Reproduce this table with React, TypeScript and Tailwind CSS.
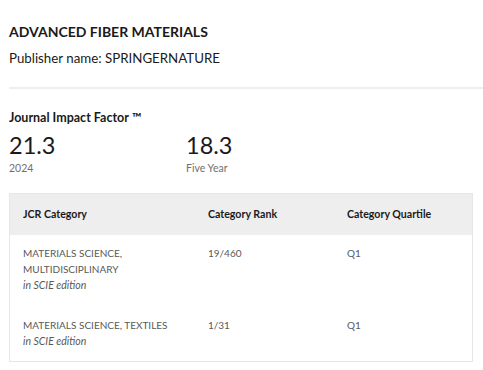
import React from 'react';

const rows = [
  { category: ['MATERIALS SCIENCE,', 'MULTIDISCIPLINARY'], rank: '19/460', quartile: 'Q1' },
  { category: ['MATERIALS SCIENCE, TEXTILES'], rank: '1/31', quartile: 'Q1' },
];

const App: React.FC = () => {
  return (
    <div className="w-[483px] h-[370px] bg-white text-[#1a1a1a] font-['Lato','Liberation_Sans',sans-serif] pl-[9px] pt-[23px]">
      <h1 className="text-[14px] font-bold leading-[18px]">ADVANCED FIBER MATERIALS</h1>
      <p className="mt-[8px] text-[13.3px] leading-[18px]">Publisher name: SPRINGERNATURE</p>

      <div className="mt-[20px] h-[2px] bg-[#eeeeee] w-[474px]" />

      <h2 className="mt-[21px] text-[12.5px] font-bold leading-[16px]">Journal Impact Factor ™</h2>
      <div className="mt-[4px] flex">
        <div className="w-[177px]">
          <div className="text-[23.5px] leading-[30px]">21.3</div>
          <div className="mt-[1px] text-[10.5px] leading-[14px] text-[#707070]">2024</div>
        </div>
        <div>
          <div className="text-[23.5px] leading-[30px]">18.3</div>
          <div className="mt-[1px] text-[10.5px] leading-[14px] text-[#707070]">Five Year</div>
        </div>
      </div>

      <div className="mt-[18px] w-[464px] border border-[#e6e6e6]">
        <div className="grid grid-cols-[185px_139px_1fr] bg-[#eeeeee] h-[41px] items-center px-[13px] text-[10.6px] font-bold">
          <div>JCR Category</div>
          <div>Category Rank</div>
          <div>Category Quartile</div>
        </div>
        <div className="px-[13px] pt-[11px] pb-[11px] text-[10px] leading-[15.5px] text-[#595959]">
          {rows.map((r, i) => (
            <div key={i} className={`grid grid-cols-[185px_139px_1fr] ${i > 0 ? 'mt-[24px]' : ''}`}>
              <div>
                {r.category.map((c) => (
                  <div key={c}>{c}</div>
                ))}
                <div className="mt-[1px] italic text-[10.5px]">in SCIE edition</div>
              </div>
              <div>{r.rank}</div>
              <div>{r.quartile}</div>
            </div>
          ))}
        </div>
      </div>
    </div>
  );
};

export default App;
